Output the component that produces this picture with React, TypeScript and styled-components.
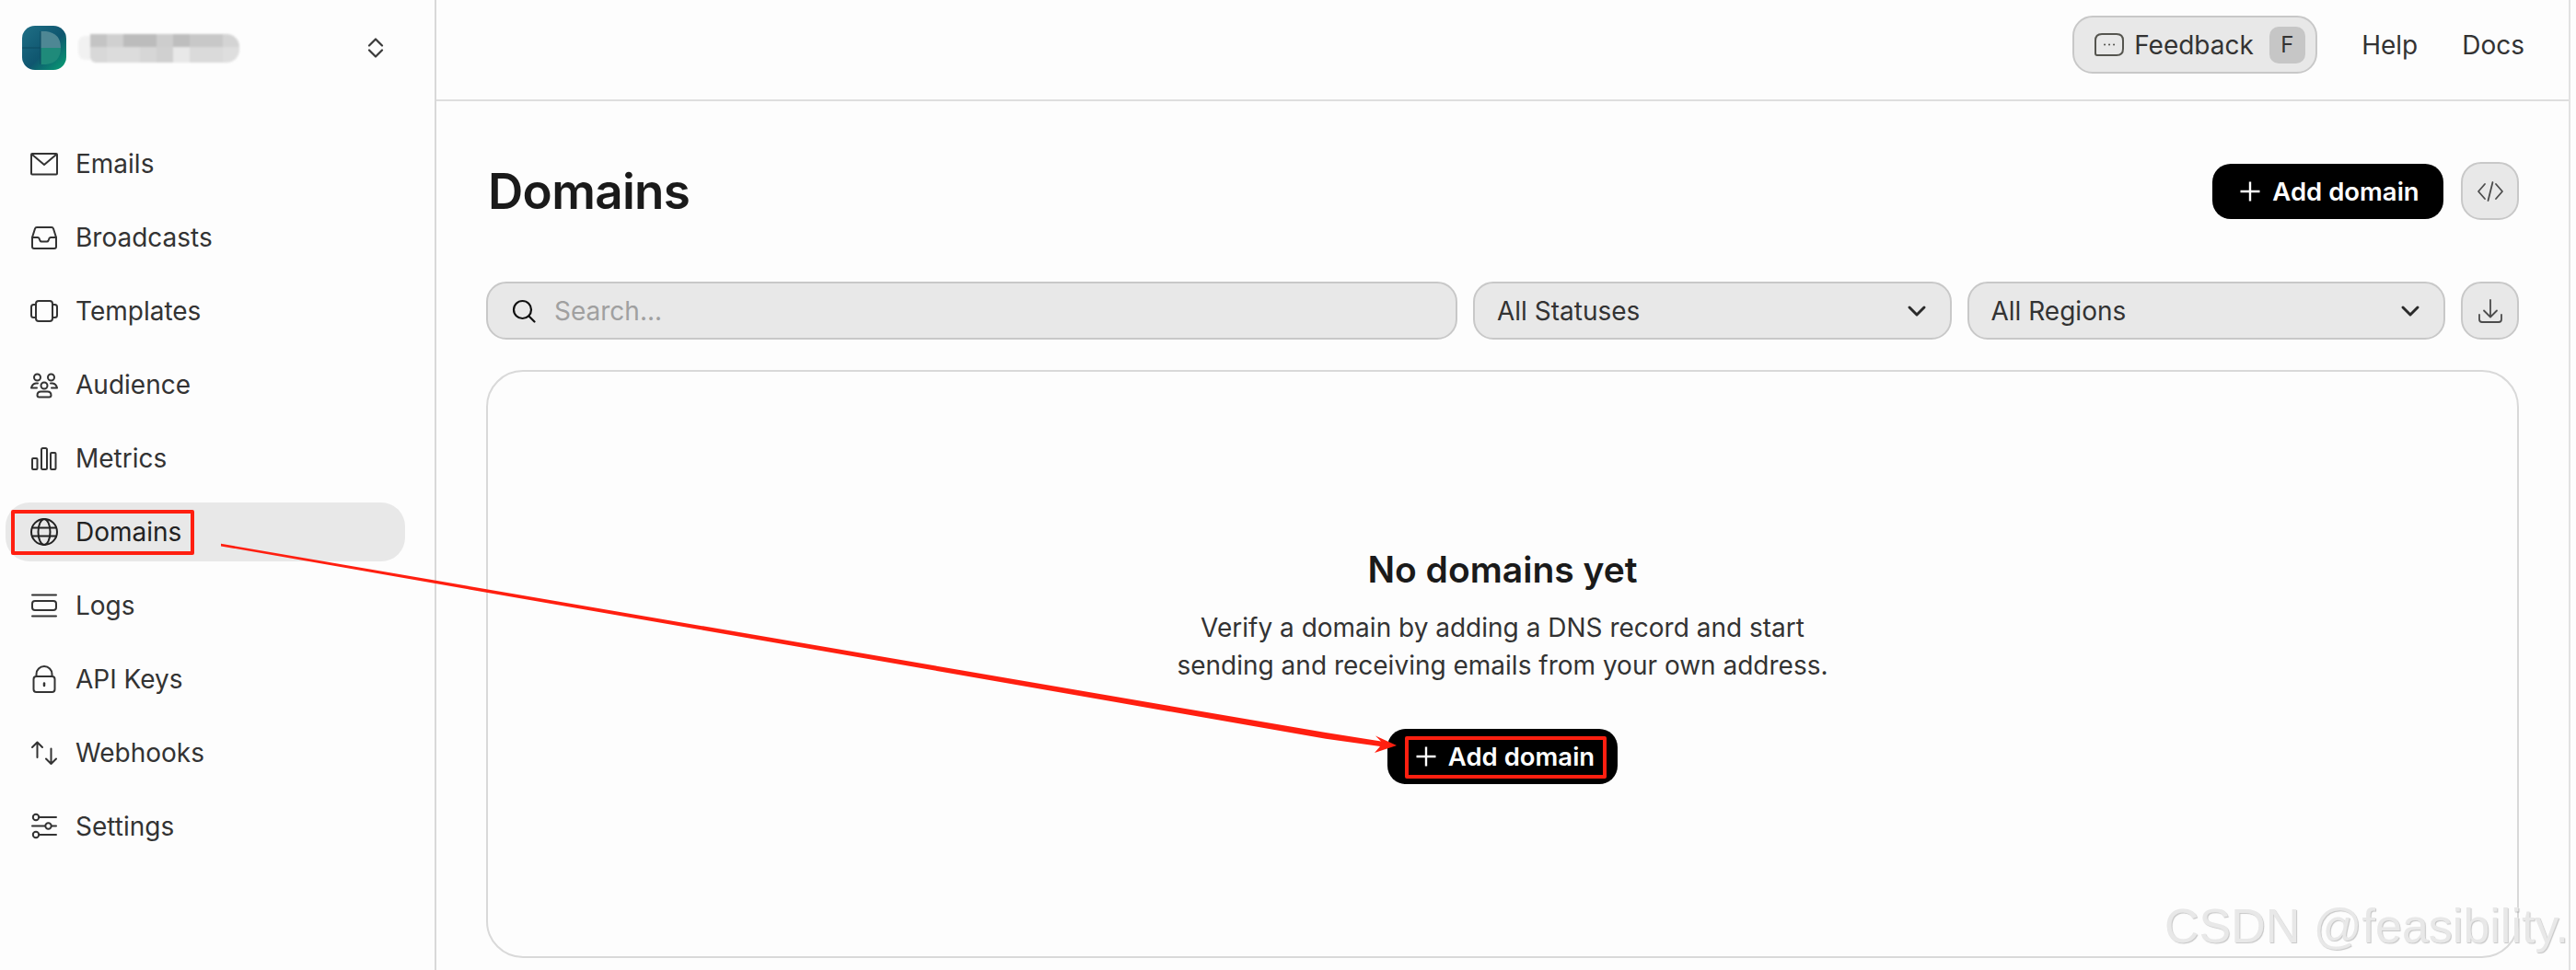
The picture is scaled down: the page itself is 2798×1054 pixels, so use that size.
import React, { FC, ReactNode } from 'react';

import styled, { createGlobalStyle } from 'styled-components';

const Icon: FC<{ size?: number; box?: number; width?: number; children: ReactNode }> = ({
	size = 30,
	box = 30,
	width = 2,
	children,
}) => (
	<svg
		width={size}
		height={size}
		viewBox={`0 0 ${box} ${box}`}
		fill='none'
		stroke='currentColor'
		strokeWidth={width}
		strokeLinecap='round'
		strokeLinejoin='round'
	>
		{children}
	</svg>
);

const navItems: { label: string; active?: boolean; icon: ReactNode }[] = [
	{
		label: 'Emails',
		icon: (
			<>
				<rect x='1' y='4' width='28' height='22.5' rx='1' />
				<path d='M2 5l13 11L28 5' />
			</>
		),
	},
	{
		label: 'Broadcasts',
		icon: (
			<>
				<path d='M7 4h16q1.500 0 2 1.500L28 15v10q0 2-2 2H4q-2 0-2-2V15L5 5.500Q5.500 4 7 4z' />
				<path d='M2 15h6q1 0 1.500 1l1 2.500q.5 1 1.500 1h6q1 0 1.500-1l1-2.500q.5-1 1.500-1h6' />
			</>
		),
	},
	{
		label: 'Templates',
		icon: (
			<>
				<rect x='6' y='4' width='18' height='22' rx='3' />
				<path d='M6 8H3.500Q1 8 1 10.500v9Q1 22 3.500 22H6' />
				<path d='M24 8h2.500Q29 8 29 10.500v9q0 2.500-2.500 2.500H24' />
			</>
		),
	},
	{
		label: 'Audience',
		icon: (
			<>
				<circle cx='7.500' cy='7' r='3.500' />
				<circle cx='22.500' cy='7' r='3.500' />
				<circle cx='15' cy='16' r='3.500' />
				<path d='M8 13.500H6Q2 14 1 18.500h6' />
				<path d='M22 13.500h2q4 .5 5 5h-6' />
				<path d='M7.500 26.500q0-4 4-4h7q4 0 4 4 0 2-2 2h-11q-2 0-2-2z' />
			</>
		),
	},
	{
		label: 'Metrics',
		icon: (
			<>
				<rect x='2' y='15' width='5.500' height='12' rx='1' />
				<rect x='12' y='4' width='6' height='23' rx='1.500' />
				<rect x='22' y='9' width='5.500' height='18' rx='1' />
			</>
		),
	},
	{
		label: 'Domains',
		active: true,
		icon: (
			<>
				<circle cx='15' cy='15' r='14' />
				<ellipse cx='15' cy='15' rx='6.500' ry='14' />
				<path d='M2 10.500h26M2 19.500h26' />
			</>
		),
	},
	{
		label: 'Logs',
		icon: (
			<>
				<path d='M2 3.500h26M2 26.500h26' />
				<rect x='2' y='10' width='26' height='10' rx='3' />
			</>
		),
	},
	{
		label: 'API Keys',
		icon: (
			<>
				<rect x='3.500' y='12' width='23' height='17' rx='3' />
				<path d='M6.500 12V9.500a8.500 8.500 0 0 1 17 0V12' />
				<path d='M15 19.500v2.500' strokeWidth={2.5} />
			</>
		),
	},
	{
		label: 'Webhooks',
		icon: (
			<>
				<path d='M7.500 3.500V20M2 9l5.500-5.500L13 9' />
				<path d='M22.500 10.500V27M17 21.500l5.500 5.500 5.500-5.500' />
			</>
		),
	},
	{
		label: 'Settings',
		icon: (
			<>
				<circle cx='6' cy='5' r='3.200' />
				<circle cx='19.500' cy='14.500' r='3.200' />
				<circle cx='6' cy='24' r='3.200' />
				<path d='M9.500 5H28M2 14.500h14M23 14.500h5M9.500 24H28' />
			</>
		),
	},
];

const topTones = ['#c4c4c4', '#d0d0d0', '#bcbcbc', '#bcbcbc', '#cdcdcd', '#bebebe', '#c8c8c8', '#c8c8c8', '#d4d4d4'];
const bottomTones = ['#d8d8d8', '#dcdcdc', '#dcdcdc', '#d6d6d6', '#d0d0d0', '#e8e8e8', '#dadada', '#dadada', '#dedede'];

const PlusIcon: FC = () => (
	<svg width='24' height='24' viewBox='0 0 24 24' fill='none' stroke='currentColor' strokeWidth='2.4'>
		<path d='M12 1.500v21M1.500 12h21' />
	</svg>
);

const SelectChevron: FC = () => (
	<ChevronSlot>
		<Icon size={22} box={22} width={3}>
			<path d='M3 7l8 8 8-8' />
		</Icon>
	</ChevronSlot>
);

const App: FC = () => {
	return (
		<Page>
			<GlobalStyle />
			<Sidebar>
				<Brand>
					<Logo>
						<svg width='48' height='48' viewBox='0 0 48 48'>
							<defs>
								<linearGradient id='logoBg' x1='0' y1='0' x2='1' y2='1'>
									<stop offset='0' stopColor='#1f6f86' />
									<stop offset='0.55' stopColor='#0f566f' />
									<stop offset='1' stopColor='#07a273' />
								</linearGradient>
							</defs>
							<rect width='48' height='48' rx='14' fill='url(#logoBg)' />
							<path d='M20 6h6q16 2 16 18H20z' fill='#4e8794' />
							<path d='M20 24h22q0 16-16 18h-6z' fill='#1f8a7a' />
							<path d='M0 24h20M20 6v36' stroke='#0d4a60' strokeWidth='1' />
						</svg>
					</Logo>
					<BlurredName>
						<NameFade />
						<NameCells>
							{topTones.map((tone, i) => (
								<NameCell key={`t${i}`} $tone={tone} />
							))}
							{bottomTones.map((tone, i) => (
								<NameCell key={`b${i}`} $tone={tone} />
							))}
						</NameCells>
					</BlurredName>
					<SwitchIcon>
						<Icon size={22} box={22} width={2.2}>
							<path d='M4 8.500l7-7 7 7M4 13.500l7 7 7-7' />
						</Icon>
					</SwitchIcon>
				</Brand>
				<Nav>
					{navItems.map((item) => (
						<NavItem key={item.label} $active={item.active}>
							<Icon>{item.icon}</Icon>
							<span>{item.label}</span>
							{item.active && <NavHighlight />}
						</NavItem>
					))}
				</Nav>
			</Sidebar>
			<Main>
				<TopBar>
					<FeedbackBtn>
						<FeedbackIcon>
							<Icon size={32} box={32} width={2}>
								<path d='M8 4h16q7 0 7 7v9q0 7-7 7H3q-2 0-2-2V11q0-7 7-7z' />
								<path d='M11 15.500h.1M16 15.500h.1M21 15.500h.1' />
							</Icon>
						</FeedbackIcon>
						<span>Feedback</span>
						<KeyBadge>F</KeyBadge>
					</FeedbackBtn>
					<TopLink>Help</TopLink>
					<TopLink>Docs</TopLink>
				</TopBar>
				<Content>
					<PageHead>
						<PageTitle>Domains</PageTitle>
						<HeadActions>
							<PrimaryBtn>
								<PlusIcon />
								Add domain
							</PrimaryBtn>
							<GhostBtn>
								<Icon size={30} box={30} width={1.8}>
									<path d='M9 7l-7 8 7 8M21 7l7 8-7 8M17.500 5l-5 20' />
								</Icon>
							</GhostBtn>
						</HeadActions>
					</PageHead>
					<Toolbar>
						<SearchBox>
							<Icon size={26} box={26} width={2.2}>
								<circle cx='11.500' cy='11.500' r='9.500' />
								<path d='M18.500 18.500l6 6' />
							</Icon>
							<SearchInput placeholder='Search...' readOnly />
						</SearchBox>
						<SelectBox>
							All Statuses
							<SelectChevron />
						</SelectBox>
						<SelectBox>
							All Regions
							<SelectChevron />
						</SelectBox>
						<GhostBtn>
							<Icon size={30} box={30} width={1.8}>
								<path d='M15 3v18M8 14.500l7 7 7-7' />
								<path d='M3 19v5q0 3 3 3h18q3 0 3-3v-5' />
							</Icon>
						</GhostBtn>
					</Toolbar>
					<EmptyCard>
						<EmptyTitle>No domains yet</EmptyTitle>
						<EmptyText>
							Verify a domain by adding a DNS record and start
							<br />
							sending and receiving emails from your own address.
						</EmptyText>
						<EmptyBtn>
							<PlusIcon />
							Add domain
							<BtnHighlight />
						</EmptyBtn>
					</EmptyCard>
				</Content>
			</Main>
			<ArrowLayer width='2798' height='1054' viewBox='0 0 2798 1054'>
				<polygon
					points='240,590.800 1440,796 1500,805.500 1494,799.500 1517,810 1493,818 1499,811 1440,802.700 240,593.400'
					fill='#ff1f10'
				/>
			</ArrowLayer>
			<Watermark>CSDN @feasibility.</Watermark>
		</Page>
	);
};

const GlobalStyle = createGlobalStyle`
	* {
		box-sizing: border-box;
	}
	html,
	body {
		margin: 0;
		padding: 0;
		background-color: #fdfdfd;
		font-family: Inter, 'Noto Sans', sans-serif;
		color: #2e2e2e;
	}
`;
const Page = styled.div`
	position: relative;
	display: flex;
	width: 2798px;
	height: 1054px;
	overflow: hidden;
	background-color: #fdfdfd;
`;
const Sidebar = styled.aside`
	width: 474px;
	flex-shrink: 0;
	padding-top: 28px;
	border-right: 2px solid #d9d9d9;
`;
const Brand = styled.div`
	display: flex;
	align-items: center;
	height: 48px;
	padding-left: 24px;
`;
const Logo = styled.div`
	width: 48px;
	height: 48px;
	flex-shrink: 0;
`;
const BlurredName = styled.div`
	display: flex;
	align-items: center;
	margin-left: 13px;
	width: 312px;
	filter: blur(0.8px);
`;
const NameFade = styled.div`
	width: 13px;
	height: 26px;
	background-color: #f1f1f1;
	border-radius: 8px 0 0 8px;
`;
const NameCells = styled.div`
	display: grid;
	grid-template-columns: repeat(9, 18px);
	grid-template-rows: 14px 17px;
	border-radius: 0 14px 14px 6px;
	overflow: hidden;
`;
const NameCell = styled.div<{ $tone: string }>`
	background-color: ${(props) => props.$tone};
`;
const SwitchIcon = styled.div`
	display: flex;
	color: #3a3a3a;
`;
const Nav = styled.nav`
	display: flex;
	flex-direction: column;
	gap: 16px;
	width: 434px;
	margin: 70px 0 0 6px;
`;
const NavItem = styled.a<{ $active?: boolean }>`
	position: relative;
	display: flex;
	align-items: center;
	gap: 19px;
	height: 64px;
	padding-left: 27px;
	font-size: 28px;
	border-radius: 26px;
	color: ${(props) => (props.$active ? '#222222' : '#333333')};
	background-color: ${(props) => (props.$active ? '#e8e8e8' : 'transparent')};
`;
const NavHighlight = styled.div`
	position: absolute;
	left: 6px;
	top: 8px;
	width: 199px;
	height: 49px;
	border: 4px solid #ff1f10;
	border-radius: 2px;
`;
const Main = styled.main`
	display: flex;
	flex-direction: column;
	flex: 1;
	margin-right: 6px;
	border-right: 2px solid #e2e2e2;
`;
const TopBar = styled.header`
	display: flex;
	align-items: center;
	justify-content: flex-end;
	gap: 48px;
	height: 110px;
	padding: 0 48px 11px 0;
	border-bottom: 2px solid #dedede;
`;
const FeedbackBtn = styled.button`
	display: flex;
	align-items: center;
	height: 63px;
	width: 266px;
	padding: 0 0 0 22px;
	font: inherit;
	font-size: 28px;
	color: #333333;
	background-color: #e8e8e8;
	border: 2px solid #c8c8c8;
	border-radius: 22px;
`;
const FeedbackIcon = styled.span`
	display: flex;
	margin-right: 11px;
	color: #55554f;
`;
const KeyBadge = styled.span`
	display: flex;
	align-items: center;
	justify-content: center;
	width: 39px;
	height: 40px;
	margin-left: 17px;
	font-size: 24px;
	background-color: #c6c6c6;
	border-radius: 10px;
`;
const TopLink = styled.a`
	font-size: 28px;
	color: #333333;
`;
const Content = styled.div`
	display: flex;
	flex-direction: column;
	flex: 1;
	padding: 66px 54px 13px;
`;
const PageHead = styled.div`
	display: flex;
	align-items: center;
	justify-content: space-between;
	height: 63px;
	margin-bottom: 67px;
`;
const PageTitle = styled.h1`
	margin: 0 0 0 2px;
	font-size: 53px;
	font-weight: 600;
	color: #1a1a1a;
	letter-spacing: -0.7px;
`;
const HeadActions = styled.div`
	display: flex;
	align-items: center;
	gap: 19px;
`;
const PrimaryBtn = styled.button`
	position: relative;
	display: flex;
	align-items: center;
	justify-content: center;
	gap: 12px;
	width: 251px;
	height: 60px;
	padding: 0 0 0 3px;
	font: inherit;
	font-size: 27.5px;
	font-weight: 600;
	color: #ffffff;
	background-color: #000000;
	border: none;
	border-radius: 20px;
`;
const GhostBtn = styled.button`
	display: flex;
	align-items: center;
	justify-content: center;
	width: 63px;
	height: 63px;
	flex-shrink: 0;
	padding: 0;
	color: #4c4c4c;
	background-color: #e8e8e8;
	border: 2px solid #c8c8c8;
	border-radius: 22px;
`;
const Toolbar = styled.div`
	display: flex;
	gap: 17px;
	height: 63px;
	margin-bottom: 33px;
`;
const SearchBox = styled.label`
	display: flex;
	align-items: center;
	gap: 20px;
	flex: 1;
	padding-left: 26px;
	color: #111111;
	background-color: #e8e8e8;
	border: 2px solid #c8c8c8;
	border-radius: 22px;
`;
const SearchInput = styled.input`
	flex: 1;
	padding: 0;
	font: inherit;
	font-size: 28px;
	color: #333333;
	background: none;
	border: none;
	outline: 0;
	&::placeholder {
		color: #a0a0a0;
		opacity: 1;
	}
`;
const SelectBox = styled.div`
	display: flex;
	align-items: center;
	justify-content: space-between;
	width: 519.5px;
	padding: 0 25px 0 24px;
	font-size: 28px;
	color: #333333;
	background-color: #e8e8e8;
	border: 2px solid #c8c8c8;
	border-radius: 22px;
`;
const ChevronSlot = styled.span`
	display: flex;
	color: #2a2a2a;
`;
const EmptyCard = styled.section`
	display: flex;
	flex-direction: column;
	align-items: center;
	justify-content: center;
	flex: 1;
	padding-top: 4px;
	background-color: #fdfdfd;
	border: 2px solid #d9d9d9;
	border-radius: 40px;
`;
const EmptyTitle = styled.h2`
	margin: 0 0 19px;
	font-size: 39px;
	line-height: 48px;
	font-weight: 600;
	color: #1a1a1a;
`;
const EmptyText = styled.p`
	margin: 0 0 48px;
	font-size: 28px;
	line-height: 41px;
	text-align: center;
	color: #333333;
`;
const EmptyBtn = styled(PrimaryBtn)`
	width: 250px;
	padding-left: 5px;
`;
const BtnHighlight = styled.div`
	position: absolute;
	left: 19px;
	top: 8px;
	width: 219px;
	height: 46px;
	border: 4px solid #ff1f10;
	border-radius: 2px;
`;
const ArrowLayer = styled.svg`
	position: absolute;
	left: 0;
	top: 0;
	pointer-events: none;
`;
const Watermark = styled.div`
	position: absolute;
	right: 8px;
	top: 975px;
	font-family: 'Liberation Sans', Arial, sans-serif;
	font-size: 52px;
	line-height: 62px;
	white-space: nowrap;
	color: #e8e8e8;
	text-shadow: 1px 1px 1px rgba(0, 0, 0, 0.22);
	pointer-events: none;
`;

export default App;
